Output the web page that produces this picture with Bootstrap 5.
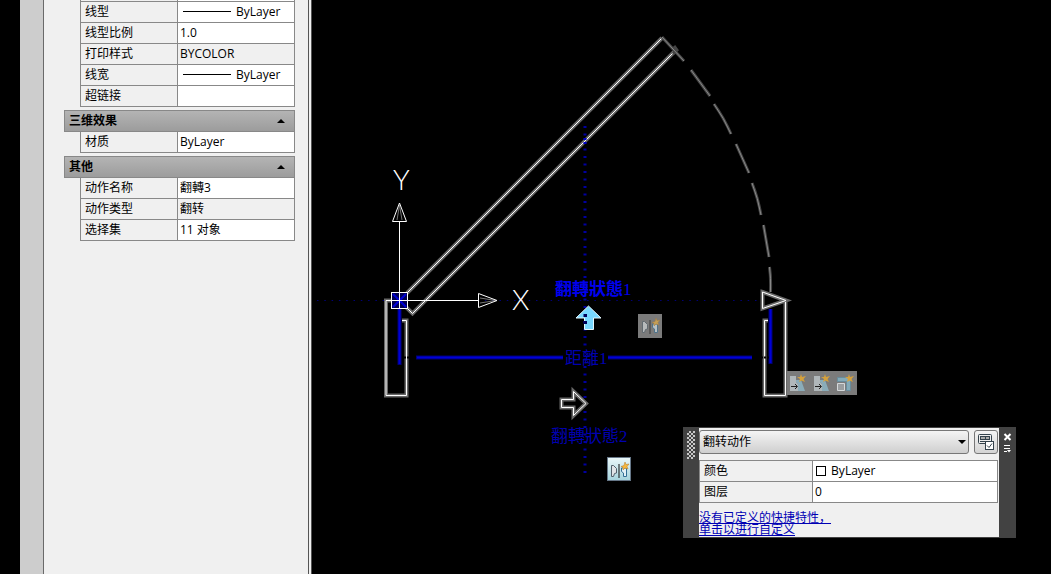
<!DOCTYPE html>
<html lang="zh-CN">
<head>
<meta charset="utf-8">
<meta name="viewport" content="width=device-width, initial-scale=1">
<title>翻转动作</title>
<link rel="stylesheet" href="https://cdn.jsdelivr.net/npm/bootstrap@5.3.0/dist/css/bootstrap.min.css">
<style>
body { background:#000; color:#000; font:12px/20px "Open Sans","Noto Sans CJK SC",sans-serif; }
.palette { width:292px; margin-left:20px; background:#f0f0f0; border-right:1px solid #555; }
.palette-strip { width:24px; background:#cdcdcd; border-right:1px solid #6a6a6a; }
.palette-body { padding-left:20px; padding-right:13px; border-right:1px solid #555; margin-right:2px; }
.props { border-collapse:separate; border-spacing:0; table-layout:fixed; width:100%; border-left:1px solid #888; }
.props th, .props td { height:21px; padding:0 2px; border-right:1px solid #888; border-bottom:1px solid #888; font-weight:400; line-height:20px; white-space:nowrap; overflow:hidden; }
.props th { width:97px; padding-left:4px; }
.props td { background:#fff; }
.props td.locked { background:#f0f0f0; }
.props tr.cut > * { height:2px; line-height:1px; }
.palette-body .props { margin-left:16px; width:calc(100% - 16px); }
.ltype { display:inline-block; width:48px; height:1px; background:#000; margin:0 5px 2px 3px; vertical-align:middle; }
.group-head { height:22px; margin-top:3px; padding:0 9px 0 4px; border:1px solid #888; background:linear-gradient(#b4b4b4,#9c9c9c); font-weight:700; line-height:20px; color:#000; }
.canvas { overflow:hidden; background:#000; min-height:100vh; }
.cad-label { font-family:"Liberation Serif","Noto Sans CJK TC",serif; font-size:17px; }
.axis-label { font-family:Lato,sans-serif; font-weight:300; font-size:28px; fill:#fff; }
.halo { stroke:#686868; stroke-width:4; fill:none; }
.core { stroke:#fff; stroke-width:1; fill:none; }
.on-canvas { position:absolute; }
.tool { width:24px; height:24px; padding:0; border:0; background:#7b7b7b; display:block; overflow:hidden; }
.tool.hot { background:linear-gradient(#e8f6f8,#a6d4dd); border:1px solid #678; }
.tool.end { width:22px; }
.tool svg { display:block; }
.bar1 { left:326px; top:314px; }
.bar2 { left:295px; top:457px; }
.bar3 { left:475px; top:371px; }
.quick { left:371px; top:427px; width:333px; background:#f0f0f0; border:solid #424242; border-width:1px 0; }
.quick-edge { background:#424242; flex:none; width:17px; }
.quick-edge.left { width:16px; }
.grip { width:8px; height:28px; margin:3px 0 0 4px; background:repeating-conic-gradient(#c8c8c8 0 25%,transparent 0 50%) 0 0/4px 4px; }
.quick-head { gap:5px; padding:2px 1px 0 0; }
.pick { height:24px; border:1px solid #777; border-radius:3px; background:linear-gradient(#f4f4f4,#cfcfcf); padding:0 16px 0 3px; font:inherit; appearance:none; color:#000; }
.pick-wrap { position:relative; }
.pick-wrap svg { position:absolute; right:3px; top:10px; pointer-events:none; }
.custom { width:24px; height:24px; padding:0; border:1px solid #777; border-radius:3px; background:linear-gradient(#f4f4f4,#d4d4d4); }
.quick .props { width:calc(100% - 1px); margin-top:6px; border-top:1px solid #888; }
.quick .props th { width:113px; padding-left:4px; }
.swatch { display:inline-block; width:10px; height:10px; border:1px solid #000; background:#fff; margin:0 2px 0 1px; vertical-align:-1px; }
.quick a { color:#0000b4; }
.quick-links { margin-top:8px; height:26px; line-height:12px; font-family:"Noto Sans CJK SC",sans-serif; }
.edge-btn { display:block; padding:0; border:0; background:none; }
</style>
</head>
<body>
<div class="d-flex min-vh-100">
  <aside class="palette d-flex flex-shrink-0">
    <div class="palette-strip flex-shrink-0"></div>
    <div class="palette-body flex-grow-1">
      <table class="props">
        <tr class="cut"><th></th><td></td></tr>
        <tr><th scope="row">线型</th><td><span class="ltype"></span>ByLayer</td></tr>
        <tr><th scope="row">线型比例</th><td>1.0</td></tr>
        <tr><th scope="row">打印样式</th><td class="locked">BYCOLOR</td></tr>
        <tr><th scope="row">线宽</th><td><span class="ltype"></span>ByLayer</td></tr>
        <tr><th scope="row">超链接</th><td></td></tr>
      </table>
      <button type="button" class="group-head w-100 d-flex align-items-center justify-content-between">三维效果
        <svg width="8" height="4"><path d="M0 4L4 0L8 4z"/></svg></button>
      <table class="props">
        <tr><th scope="row">材质</th><td>ByLayer</td></tr>
      </table>
      <button type="button" class="group-head w-100 d-flex align-items-center justify-content-between">其他
        <svg width="8" height="4"><path d="M0 4L4 0L8 4z"/></svg></button>
      <table class="props">
        <tr><th scope="row">动作名称</th><td>翻轉3</td></tr>
        <tr><th scope="row">动作类型</th><td class="locked">翻转</td></tr>
        <tr><th scope="row">选择集</th><td>11 对象</td></tr>
      </table>
    </div>
  </aside>

  <main class="canvas position-relative flex-grow-1">
    <svg class="on-canvas top-0 start-0 w-100 h-100">
      <defs>
        <g id="door">
          <path d="M392 300.5H386V395.5H406.500V320.500H402"/>
          <path d="M407 293L662 38M406 307L412.500 313.500L674 52"/>
          <path d="M785.500 302V395.500H764.500V320.500H768"/>
          <path d="M762.500 292L786 300.500L762.500 308.500Z"/>
          <path d="M561.500 399.500H573.500V391.500L586 403.500L573.500 415.500V407.500H561.500Z"/>
        </g>
        <g id="flip">
          <path d="M3.500 15.500V4.500H5.500L8.500 7.500V12L6.500 12.500L5.500 15.500Z" fill="#e0e4e7" stroke="#52616b"/>
          <path d="M11 3V17" stroke="#111"/>
          <path d="M18.500 7V15.500H15.500V12L13.500 10.500V7Z" fill="#e2f1f7" stroke="#326f94"/>
          <path d="M17 1L18 3.500L21 3L19 5.500L20 8L17 7L15 9V6.500L13 5.500L16 4.500Z" fill="#f7b83e" stroke="#b77920" stroke-width=".5"/>
        </g>
        <path id="spark" d="M15 4L16 7L20 6L17.500 9L19 12L15.500 10.500L13 12L14 9L11 7L14 7Z" fill="#d5a13c"/>
        <g id="move">
          <path d="M3 5H9V11L11 13V20H3Z" fill="#b0b7ba"/>
          <path d="M9 9H14L18 20H11V13L9 11Z" fill="#8aacb9"/>
          <path d="M4 15.500H10M8 13L10.500 15.500L8 18" stroke="#222" fill="none"/>
          <use href="#spark" transform="translate(-1 -1)"/>
        </g>
      </defs>
      <g transform="translate(-312 0)" fill="none">
        <path d="M317 300.500H762" stroke="#000078" stroke-dasharray="1.500 5.800"/>
        <path d="M585 126V475" stroke="#0000a0" stroke-width="3" stroke-dasharray="2 5.500"/>
        <path d="M399.500 309V365M416 357.500H563M608 357.500H752M770.500 309V364" stroke="#000078" stroke-width="4"/>
        <path d="M399.500 309V364M417 357.500H563M608 357.500H752M770.500 309V363" stroke="#0000d8" stroke-width="2"/>
        <use href="#door" class="halo"/><use href="#door" class="core"/>
        <path d="M662 37L684 61M674 46L677 50L673 54M691 70L710 96M714 104Q724 118 731 134M736 144L749 173M752 183Q758 198 761 215M763.500 225L769 257M769.500 267Q771 277 770.500 292" stroke="#454545" stroke-width="3"/>
        <path d="M662 37L684 61M691 70L710 96M714 104Q724 118 731 134M736 144L749 173M752 183Q758 198 761 215M763.500 225L769 257M769.500 267Q771 277 770.500 292" stroke="#888"/>
        <path d="M585 138V144" stroke="#00c" stroke-width="3" stroke-dasharray="2 2"/>
        <rect x="391.500" y="292.500" width="16" height="16" fill="#000050"/>
        <path d="M393 294L406 307M406 294L393 307" stroke="#0000d8" stroke-width="2"/>
        <g stroke="#fff" shape-rendering="crispEdges"><rect x="391.500" y="292.500" width="16" height="16"/><path d="M399.500 221V308M392 300.500H479"/></g>
        <path d="M397 220L399.500 205L402 220M480 298L496 300.500L480 303" stroke="#777"/>
        <path d="M399.500 203L406.500 221.500H392.500ZM497 300.500L478.500 307.500V293.500Z" stroke="#fff"/>
        <path d="M404 357.500H410M761 357.500H769" stroke="#000" stroke-width="2" stroke-dasharray="2 1"/>
        <path d="M588.500 306L601 318H593.500V329.500H584.500V318H576Z" fill="#78d8ff" stroke="#e4f8ff"/>
        <path d="M583.500 315.500H587M583.500 322.500H587" stroke="#00005a" stroke-width="3"/>
        <text x="393" y="190" class="axis-label">Y</text>
        <text x="512" y="310" class="axis-label">X</text>
        <g class="cad-label" fill="#0000b0">
          <text x="555" y="295" fill="#0000f0" font-weight="700">翻轉狀態<tspan font-weight="400">1</tspan></text>
          <text x="565" y="364">距離1</text>
          <text x="551" y="442">翻轉狀態2</text>
        </g>
      </g>
    </svg>

    <button type="button" class="tool on-canvas bar1" aria-label="翻转"><svg width="24" height="24" opacity=".6"><use href="#flip" transform="translate(1 3)"/></svg></button>
    <button type="button" class="tool hot on-canvas bar2" aria-label="翻转"><svg width="22" height="22"><use href="#flip" transform="translate(0 3)"/></svg></button>
    <div class="on-canvas bar3 d-flex">
      <button type="button" class="tool" aria-label="移动"><svg width="24" height="24"><use href="#move"/></svg></button>
      <button type="button" class="tool" aria-label="拉伸"><svg width="24" height="24"><use href="#move"/></svg></button>
      <button type="button" class="tool end" aria-label="缩放"><svg width="22" height="24"><path d="M2.500 10.500V6.500H15.500V19.500H11.500V10.500Z" fill="#83aab8" stroke="#688c9c"/><path d="M2.500 12.500H9.500V19.500H2.500Z" fill="#9a9ea0" stroke="#d4d8da"/><use href="#spark" transform="translate(-1 -1)"/></svg></button>
    </div>

    <section class="quick on-canvas d-flex">
      <div class="quick-edge left"><div class="grip"></div></div>
      <div class="flex-grow-1">
        <div class="quick-head d-flex">
          <div class="pick-wrap flex-grow-1"><select class="pick w-100" aria-label="对象类型"><option>翻转动作</option></select>
            <svg width="8" height="4"><path d="M0 0H8L4 4z"/></svg></div>
          <button type="button" class="custom" aria-label="自定义"><svg width="22" height="22" class="d-block"><g fill="#eee" stroke="#34424c"><rect x="3.500" y="3.500" width="13" height="9" rx="1"/><rect x="5.500" y="5.500" width="9" height="3" fill="#aaa"/><path d="M10.500 5V8M5 10.500H10"/><rect x="10.500" y="10.500" width="8" height="8" fill="#fff"/><path d="M12 14.500L14 16.500L17 12.500" fill="none"/></g></svg></button>
        </div>
        <table class="props">
          <tr><th scope="row">颜色</th><td><span class="swatch"></span> ByLayer</td></tr>
          <tr><th scope="row">图层</th><td>0</td></tr>
        </table>
        <div class="quick-links"><a href="#">没有已定义的快捷特性，<br>单击以进行自定义</a></div>
      </div>
      <div class="quick-edge">
        <button type="button" class="edge-btn" aria-label="关闭"><svg width="17" height="15" class="d-block"><path d="M5.500 6L11.500 12M11.500 6L5.500 12" stroke="#fff" stroke-width="2"/></svg></button>
        <button type="button" class="edge-btn" aria-label="选项"><svg width="17" height="12" class="d-block"><path d="M5 2.500H11M5 5.500H11M5 8.500H8" stroke="#fff"/><path d="M8 7H12L10 9.500Z" fill="#fff"/></svg></button>
      </div>
    </section>
  </main>
</div>
<script src="https://cdn.jsdelivr.net/npm/bootstrap@5.3.0/dist/js/bootstrap.bundle.min.js"></script>
</body>
</html>
